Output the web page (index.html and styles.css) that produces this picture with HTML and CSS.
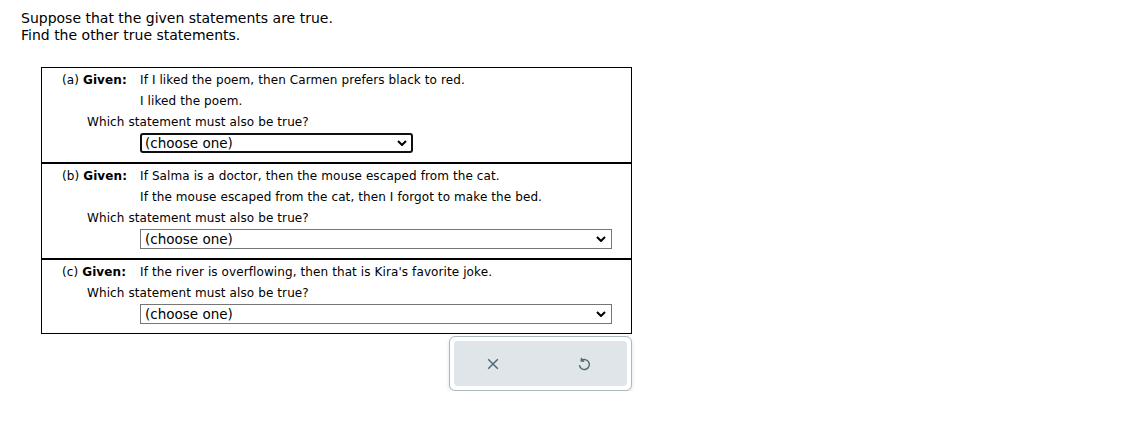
FILE: index.html
```html
<!DOCTYPE html>
<html>
<head>
<meta charset="utf-8">
<link rel="stylesheet" href="styles.css">
</head>
<body>
<div class="page">
  <div class="intro">
    <div>Suppose that the given statements are true.</div>
    <div>Find the other true statements.</div>
  </div>
  <div class="problems">
    <div class="problem">
      <div class="line"><span class="label">(a) <b>Given:</b></span><span>If I liked the poem, then Carmen prefers black to red.</span></div>
      <div class="line"><span class="label"></span><span>I liked the poem.</span></div>
      <div class="line question">Which statement must also be true?</div>
      <div class="sel-row"><div class="select focused narrow"><span>(choose one)</span><svg class="chev" viewBox="0 0 10 6" width="10" height="6"><path d="M1 1 L5 5 L9 1" fill="none" stroke="#000" stroke-width="2"/></svg></div></div>
    </div>
    <div class="problem">
      <div class="line"><span class="label">(b) <b>Given:</b></span><span>If Salma is a doctor, then the mouse escaped from the cat.</span></div>
      <div class="line"><span class="label"></span><span>If the mouse escaped from the cat, then I forgot to make the bed.</span></div>
      <div class="line question">Which statement must also be true?</div>
      <div class="sel-row"><div class="select wide"><span>(choose one)</span><svg class="chev" viewBox="0 0 10 6" width="10" height="6"><path d="M1 1 L5 5 L9 1" fill="none" stroke="#000" stroke-width="2"/></svg></div></div>
    </div>
    <div class="problem">
      <div class="line"><span class="label">(c) <b>Given:</b></span><span>If the river is overflowing, then that is Kira's favorite joke.</span></div>
      <div class="line question">Which statement must also be true?</div>
      <div class="sel-row"><div class="select wide"><span>(choose one)</span><svg class="chev" viewBox="0 0 10 6" width="10" height="6"><path d="M1 1 L5 5 L9 1" fill="none" stroke="#000" stroke-width="2"/></svg></div></div>
    </div>
  </div>
  <div class="actions-wrap">
    <div class="actions">
      <div class="inner">
        <svg class="icon" viewBox="0 0 12 12" width="12" height="12"><path d="M1.2 1.2 L10.8 10.8 M10.8 1.2 L1.2 10.8" stroke="#4d6b78" stroke-width="1.5" fill="none"/></svg>
        <svg class="icon" viewBox="0 0 14 14" width="14" height="14"><path d="M4.2 3.6 A5 5 0 1 1 2.4 8.2" stroke="#4d6b78" stroke-width="1.4" fill="none"/><path d="M4.6 0.8 L4.2 3.8 L7.2 4.2" stroke="#4d6b78" stroke-width="1.4" fill="none"/></svg>
      </div>
    </div>
  </div>
</div>
</body>
</html>
```
FILE: styles.css
```css
html, body {
  margin: 0;
  padding: 0;
  background: #fff;
}
.page {
  padding: 10px 0 0 21px;
  font-family: "DejaVu Sans", Verdana, sans-serif;
  color: #000;
}
.intro {
  font-size: 14px;
  line-height: 17px;
}
.problems {
  margin-top: 23px;
  margin-left: 20px;
  width: 591px;
  font-size: 12px;
  letter-spacing: 0.1px;
}
.problem {
  border: 1px solid #000;
  padding-top: 2px;
  padding-bottom: 9px;
}
.line {
  display: flex;
  height: 21px;
  line-height: 21px;
  white-space: nowrap;
}
.label {
  width: 78px;
  padding-left: 20px;
  flex: none;
}
.question {
  padding-left: 45px;
}
.sel-row {
  padding-left: 98px;
}
.select {
  display: flex;
  align-items: center;
  justify-content: space-between;
  box-sizing: border-box;
  height: 20px;
  border: 1px solid #767676;
  border-radius: 0;
  padding: 0 5px 0 4px;
  font-size: 13.5px;
  letter-spacing: 0;
  background: #fff;
}
.select.focused {
  border: 2px solid #101010;
  border-radius: 3px;
  padding-left: 3px;
  padding-right: 4px;
}
.narrow { width: 273px; }
.wide { width: 472px; }
.chev { flex: none; }
.actions-wrap {
  margin-left: 428px;
  margin-top: 2px;
}
.actions {
  box-sizing: border-box;
  width: 183px;
  height: 55px;
  border: 1px solid #a9b8bf;
  border-radius: 6px;
  padding: 4px;
  box-shadow: 0 2px 4px rgba(0,0,0,0.12);
  background: #fff;
}
.inner {
  height: 100%;
  background: #dfe5e8;
  border-radius: 4px;
  display: flex;
  align-items: center;
  justify-content: space-between;
  padding: 0 36px 0 33px;
}
.icon { flex: none; }
```
